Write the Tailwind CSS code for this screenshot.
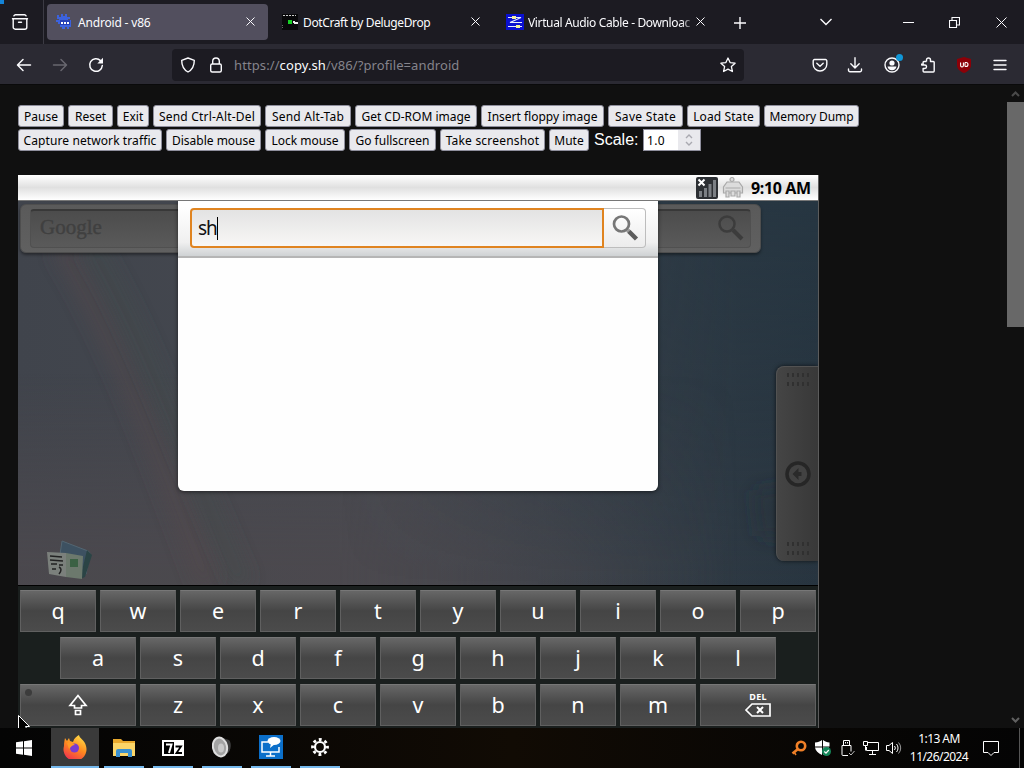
<!DOCTYPE html>
<html lang="en">
<head>
    <meta charset="UTF-8">
    <meta name="viewport" content="width=device-width, initial-scale=1.0">
    <title>Android - v86</title>
    <script src="https://cdn.jsdelivr.net/npm/@tailwindcss/browser@4"></script>
</head>
<body class="w-[1024px] h-[768px] overflow-hidden bg-[#101010] font-['Noto_Sans',sans-serif] flex flex-col relative">

    <!-- Tab strip -->
    <header class="h-[44px] shrink-0 bg-[#1c1b22] flex items-center text-[#fbfbfe] text-[12px]">
        <div class="w-[43px] flex justify-center pr-[3px]">
            <svg class="w-[18px] h-[18px]" viewBox="0 0 18 18" fill="none" stroke="currentColor" stroke-width="1.4" stroke-linecap="round"><path d="M2.900 2.800a2 2 0 0 1 1.600-1h9a2 2 0 0 1 1.600 1"/><path d="M1.500 5.800h15"/><path d="M2.200 5.800v8.400a2 2 0 0 0 2 2h9.600a2 2 0 0 0 2-2V5.800"/><path d="M7.500 9.300h3"/></svg>
        </div>
        <div class="w-px h-full bg-[#3c3b44]"></div>
        <div class="flex gap-1 pl-[3px] h-[36px] -mt-px">
            <div class="w-[221px] rounded bg-[#524f5e] flex items-center pl-[9px] pr-[12px]">
                <svg class="w-4 h-4 shrink-0" viewBox="0 0 16 16"><path fill="#3c62dd" d="M1 1h2v2h2V0h2v2h2V0h2v3h3v2h-2v1h3v7h-2v2h-2v-2H9v2H6v-2H4v-3H2V8H0V6h3V5H1z"/><path fill="#243fb5" d="M4 6h10v5H4z"/><path fill="#fff" d="M5 8h2v2H5zM8 8h2v2H8zM11 8h2v2h-2z"/></svg>
                <span class="ml-[6px] mt-[2px] flex-1 whitespace-nowrap tracking-[-0.18px]">Android - v86</span>
                <svg class="w-[11px] h-[11px]" viewBox="0 0 11 11" stroke="currentColor"><path d="M1.500 1.500l8 8M9.500 1.500l-8 8"/></svg>
            </div>
            <div class="w-[221px] flex items-center pl-[10px] pr-[12px]">
                <svg class="w-4 h-4 shrink-0" viewBox="0 0 16 16"><path fill="#08080a" d="M0 0h16v16H0z"/><path stroke="#ccc" stroke-dasharray="2 1" d="M1 1.500h13"/><path fill="#18d026" d="M6 6h4v4H6z"/><path fill="#eee" d="M11 7h2v1h3v2h-4V9h-1z"/><path stroke="#666" stroke-dasharray="1 1" d="M.5 11v4"/></svg>
                <span class="ml-[5px] mt-[2px] flex-1 whitespace-nowrap tracking-[-0.38px]">DotCraft by DelugeDrop</span>
                <svg class="w-[11px] h-[11px]" viewBox="0 0 11 11" stroke="currentColor"><path d="M1.500 1.500l8 8M9.500 1.500l-8 8"/></svg>
            </div>
            <div class="w-[221px] flex items-center pl-[10px] pr-[11px]">
                <svg class="w-[18px] h-4 -mx-px shrink-0" viewBox="0 0 18 16"><path fill="#0a10d0" d="M0 0h18v16H0z"/><path fill="none" stroke="#e8eeff" stroke-width="1.200" d="M2 3.500h13L4 8.500h4M2 12.500h14M8 8.500h8"/><path fill="#f3f0a0" d="M6 2h4v3H6zM10 11h4v3h-4z"/></svg>
                <span class="ml-[5px] mt-[2px] w-[167px] overflow-hidden whitespace-nowrap tracking-[-0.37px] mask-r-from-92%">Virtual Audio Cable - Downloac</span>
                <svg class="w-[11px] h-[11px] shrink-0" viewBox="0 0 11 11" stroke="currentColor"><path d="M1.500 1.500l8 8M9.500 1.500l-8 8"/></svg>
            </div>
        </div>
        <svg class="w-3 h-3 ml-[16px] mt-[2px]" viewBox="0 0 12 12" stroke="currentColor" stroke-width="1.400"><path d="M6 0v12M0 6h12"/></svg>
        <svg class="w-[14px] h-2 ml-[73px]" viewBox="0 0 14 8" fill="none" stroke="currentColor" stroke-width="1.400"><path d="M1.500 1L7 6.500 12.500 1"/></svg>
        <svg class="w-[11px] h-[11px] ml-[70px]" viewBox="0 0 11 11" stroke="currentColor"><path d="M0 5.500h11"/></svg>
        <svg class="w-[11px] h-[11px] ml-[35px]" viewBox="0 0 11 11" fill="none" stroke="currentColor" stroke-width="1.100"><path d="M.5 3.500h7v7h-7zM3 3V.5h7.500V8H8"/></svg>
        <svg class="w-[11px] h-[11px] ml-[36px]" viewBox="0 0 11 11" stroke="currentColor"><path d="M.5.5l10 10M10.500.5l-10 10"/></svg>
    </header>

    <!-- Navigation toolbar -->
    <nav class="h-[40px] shrink-0 bg-[#2b2a33] flex items-center text-[#fbfbfe] pt-px">
        <svg class="w-4 h-4 ml-4" viewBox="0 0 16 16" fill="none" stroke="currentColor" stroke-width="1.500" stroke-linecap="round" stroke-linejoin="round"><path d="M14.500 8H1.800M7 2.500L1.500 8 7 13.500"/></svg>
        <svg class="w-4 h-4 ml-5 text-[#68676f]" viewBox="0 0 16 16" fill="none" stroke="currentColor" stroke-width="1.500" stroke-linecap="round" stroke-linejoin="round"><path d="M1.500 8h12.700M9 2.500L14.500 8 9 13.500"/></svg>
        <svg class="w-4 h-4 ml-5" viewBox="0 0 16 16" fill="none" stroke="currentColor" stroke-width="1.500" stroke-linecap="round"><path d="M14.300 8.500A6.300 6.300 0 1 1 12.500 3.600"/><path fill="currentColor" stroke="none" d="M15 .8v5.700H9.300z"/></svg>
        <div class="ml-[68px] w-[572px] h-8 rounded bg-[#1c1b22] flex items-center text-[13px]">
            <svg class="w-4 h-4 ml-2" viewBox="0 0 16 16" fill="none" stroke="currentColor" stroke-width="1.400" stroke-linejoin="round"><path d="M8 1l6.300 2.300c0 5.200-1.800 9.400-6.300 11.700C3.500 12.700 1.700 8.500 1.700 3.300z"/></svg>
            <svg class="w-4 h-4 ml-3" viewBox="0 0 16 16" fill="none" stroke="currentColor" stroke-width="1.400"><rect x="2.700" y="7" width="10.600" height="8" rx="1.500"/><path d="M4.700 7V4.300a3.300 3.300 0 0 1 6.600 0V7"/></svg>
            <span class="ml-[10px] mt-[2px] flex-1 text-[#85848c] whitespace-nowrap tracking-[0.1px]">https://<span class="text-[#fbfbfe]">copy.sh</span>/v86/?profile=android</span>
            <svg class="w-4 h-4 mr-2" viewBox="0 0 16 16" fill="none" stroke="currentColor" stroke-width="1.300" stroke-linejoin="round"><path d="M8 1l2.100 4.600 5 .6-3.700 3.400 1 4.900L8 12.100l-4.400 2.400 1-4.900L.9 6.200l5-.6z"/></svg>
        </div>
        <svg class="w-4 h-4 ml-[68px]" viewBox="0 0 16 16" fill="none" stroke="currentColor" stroke-width="1.400" stroke-linecap="round" stroke-linejoin="round"><path d="M2.500 2.500h11a1.300 1.300 0 0 1 1.300 1.300v3.400a6.800 6.800 0 0 1-13.600 0V3.800a1.300 1.300 0 0 1 1.300-1.300z"/><path d="M4.800 6.300L8 9.300l3.200-3"/></svg>
        <svg class="w-4 h-4 ml-[19px]" viewBox="0 0 16 16" fill="none" stroke="currentColor" stroke-width="1.400" stroke-linecap="round" stroke-linejoin="round"><path d="M8 .8v10M3.800 6.800L8 11l4.200-4.200M1.500 12v1.200a1.500 1.500 0 0 0 1.500 1.500h10a1.500 1.500 0 0 0 1.500-1.500V12"/></svg>
        <div class="relative ml-[21px]">
            <svg class="w-4 h-4" viewBox="0 0 16 16" fill="none" stroke="currentColor" stroke-width="1.400"><circle cx="8" cy="8" r="7"/><circle cx="8" cy="6" r="2.600" fill="currentColor" stroke="none"/><path fill="currentColor" stroke="none" d="M3.500 9.500h9c-.3 2.300-2 3.800-4.500 3.800s-4.200-1.500-4.500-3.800z"/></svg>
            <span class="absolute -top-[3px] -right-[3px] w-[7px] h-[7px] rounded-full bg-[#1097d8]"></span>
        </div>
        <svg class="w-4 h-4 ml-[20px]" viewBox="0 0 16 16" fill="none" stroke="currentColor" stroke-width="1.400" stroke-linejoin="round"><path d="M6.500 4.500V3a2 2 0 0 1 4 0v1.500h2.800a.9.900 0 0 1 .9.900v8.700a.9.900 0 0 1-.9.900H4a.9.900 0 0 1-.9-.9v-2.600h1.700a1.700 1.700 0 0 0 0-3.500H1.700V6.500M3.100 8V5.400a.9.900 0 0 1 .9-.9h2.500"/></svg>
        <svg class="w-4 h-4 ml-5" viewBox="0 0 16 16"><path fill="#8c0008" d="M8 0l7 2v6c0 4-3 6.500-7 8-4-1.500-7-4-7-8V2z"/><path fill="none" stroke="#fff" stroke-width="1.100" d="M4.600 5.500v3a1.200 1.200 0 0 0 2.800 0v-3M9 5.500v4M9 9.500h1a1.800 1.800 0 0 0 0-4H9"/></svg>
        <svg class="w-4 h-4 ml-5" viewBox="0 0 16 16" stroke="currentColor" stroke-width="1.400" stroke-linecap="round"><path d="M2 3.500h12M2 8h12M2 12.500h12"/></svg>
    </nav>

    <!-- Page -->
    <main class="h-[644px] shrink-0 flex border-t border-[#0a0a0b]">
        <div class="flex-1 pl-[18px] pt-[20px] flex flex-col">
            <div id="vm-buttons" class="flex flex-col gap-[2px] text-black text-[12px]">
                <div class="flex gap-1 h-[22px]">
                    <button class="w-[46px] rounded-[3px] border border-[#8f8f9d] bg-[#e9e9ed] whitespace-nowrap flex items-center justify-center pt-[2px]">Pause</button>
                    <button class="w-[45px] rounded-[3px] border border-[#8f8f9d] bg-[#e9e9ed] whitespace-nowrap flex items-center justify-center pt-[2px]">Reset</button>
                    <button class="w-[32px] rounded-[3px] border border-[#8f8f9d] bg-[#e9e9ed] whitespace-nowrap flex items-center justify-center pt-[2px]">Exit</button>
                    <button class="w-[108px] rounded-[3px] border border-[#8f8f9d] bg-[#e9e9ed] whitespace-nowrap flex items-center justify-center pt-[2px] tracking-[0.2px]">Send Ctrl-Alt-Del</button>
                    <button class="w-[86px] rounded-[3px] border border-[#8f8f9d] bg-[#e9e9ed] whitespace-nowrap flex items-center justify-center pt-[2px] tracking-[0.2px]">Send Alt-Tab</button>
                    <button class="w-[122px] rounded-[3px] border border-[#8f8f9d] bg-[#e9e9ed] whitespace-nowrap flex items-center justify-center pt-[2px]">Get CD-ROM image</button>
                    <button class="w-[123px] rounded-[3px] border border-[#8f8f9d] bg-[#e9e9ed] whitespace-nowrap flex items-center justify-center pt-[2px]">Insert floppy image</button>
                    <button class="w-[75px] rounded-[3px] border border-[#8f8f9d] bg-[#e9e9ed] whitespace-nowrap flex items-center justify-center pt-[2px] tracking-[0.3px]">Save State</button>
                    <button class="w-[73px] rounded-[3px] border border-[#8f8f9d] bg-[#e9e9ed] whitespace-nowrap flex items-center justify-center pt-[2px] tracking-[0.1px]">Load State</button>
                    <button class="w-[95px] rounded-[3px] border border-[#8f8f9d] bg-[#e9e9ed] whitespace-nowrap flex items-center justify-center pt-[2px] -tracking-[0.1px]">Memory Dump</button>
                </div>
                <div class="flex gap-1 h-[22px]">
                    <button class="w-[144px] rounded-[3px] border border-[#8f8f9d] bg-[#e9e9ed] whitespace-nowrap flex items-center justify-center pt-[2px] tracking-[0.1px]">Capture network traffic</button>
                    <button class="w-[95px] rounded-[3px] border border-[#8f8f9d] bg-[#e9e9ed] whitespace-nowrap flex items-center justify-center pt-[2px]">Disable mouse</button>
                    <button class="w-[80px] rounded-[3px] border border-[#8f8f9d] bg-[#e9e9ed] whitespace-nowrap flex items-center justify-center pt-[2px]">Lock mouse</button>
                    <button class="w-[87px] rounded-[3px] border border-[#8f8f9d] bg-[#e9e9ed] whitespace-nowrap flex items-center justify-center pt-[2px]">Go fullscreen</button>
                    <button class="w-[105px] rounded-[3px] border border-[#8f8f9d] bg-[#e9e9ed] whitespace-nowrap flex items-center justify-center pt-[2px] tracking-[0.2px]">Take screenshot</button>
                    <button class="w-[40px] rounded-[3px] border border-[#8f8f9d] bg-[#e9e9ed] whitespace-nowrap flex items-center justify-center pt-[2px]">Mute</button>
                    <span class="w-[46px] pl-px text-white text-[16px] leading-[21px] font-['Liberation_Sans',sans-serif]">Scale:</span>
                    <div class="w-[58px] bg-white border border-[#8f8f9d] flex items-center justify-between pl-[3px]">
                        <span class="pt-[2px] tracking-[0.3px]">1.0</span>
                        <span class="w-[22px] h-full bg-[#e9e9ed] flex items-center justify-center">
                            <svg class="w-2 h-3" viewBox="0 0 8 12" fill="none" stroke="#a9a9b0" stroke-width="1.400"><path d="M1 4l3-3 3 3M1 8l3 3 3-3"/></svg>
                        </span>
                    </div>
                </div>
            </div>

            <!-- Emulated screen -->
            <div class="mt-[24px] w-[801px] h-[553px] flex flex-col border-r border-[#5c5c5c]">
                <div class="h-[26px] shrink-0 bg-linear-to-b from-white via-[#e0e0e0] to-white border-b border-[#777] flex items-center justify-end pr-[7px]">
                    <svg class="w-[22px] h-[22px]" viewBox="0 0 22 22"><rect width="22" height="22" rx="2" fill="#2c2f33"/><path fill="#7b7f84" d="M3 14h3v6H3zM8 11h3v9H8zM12.500 7h3v13h-3zM17 3h3v17h-3z"/><path stroke="#fff" stroke-width="2" d="M2.500 2.500l6 6M8.500 2.500l-6 6"/></svg>
                    <svg class="w-[22px] h-[23px] ml-[4px]" viewBox="0 0 22 23" fill="#dcdcdc" stroke="#a9a9a9" stroke-width="1.200"><circle cx="10" cy="3.500" r="2"/><path d="M5 6h12l3.500 5v6h-19v-6z"/><path d="M3.500 12h15M4 15h3v6H4zM9 15h4v5H9zM15 15h3v6h-3z"/></svg>
                    <span class="w-[60px] ml-[7px] text-[16px] font-bold text-black leading-none tracking-[-0.35px] whitespace-nowrap">9:10 AM</span>
                </div>
                <div class="relative h-[384px] shrink-0 overflow-hidden bg-linear-to-r from-[#40444c] from-0% via-[#464950] via-45% to-[#283540] to-100%">
                    <!-- Wallpaper tints -->
                    <div class="absolute inset-0 bg-linear-to-t from-[#4c494e]/90 from-5% to-transparent to-55% mask-r-from-40% mask-r-to-90%"></div>
                    <div class="absolute inset-0 bg-linear-to-b from-[#253642]/60 to-transparent mask-l-from-10% mask-l-to-60%"></div>
                    <svg class="absolute inset-0 w-full h-full" viewBox="0 0 800 384" preserveAspectRatio="none">
                        <defs><filter id="soft" x="-50%" y="-50%" width="200%" height="200%"><feGaussianBlur stdDeviation="9"/></filter></defs>
                        <path fill="none" stroke="#54494a" stroke-opacity=".55" stroke-width="20" filter="url(#soft)" d="M42 45C95 130 140 250 190 384"/>
                        <path fill="none" stroke="#434c49" stroke-opacity=".5" stroke-width="18" filter="url(#soft)" d="M72 45C124 130 165 250 225 384"/>
                        <path fill="#202c3a" fill-opacity=".4" filter="url(#soft)" d="M735 290l65-10v60l-60-5z"/>
                    </svg>

                    <!-- Home screen search widget -->
                    <div class="absolute left-[2px] top-[3px] w-[741px] h-[49px] rounded-md bg-linear-to-b from-[#5a5a5a] to-[#606060] border border-[#4e4e4e] shadow-[0_2px_3px_#0006] px-[9px] py-[4px]">
                        <div class="h-full rounded-[4px] border border-[#505050] border-t-2 border-t-[#383838] bg-linear-to-b from-[#4c4c4c] to-[#5a5a5a] flex items-center justify-between pl-[9px] pr-[6px]">
                            <span class="-mt-[3px] font-['Liberation_Serif',serif] text-[21px] text-[#404040] [-webkit-text-stroke:0.4px_#404040]">Google</span>
                            <svg class="w-[28px] h-[28px] -mt-[3px]" viewBox="0 0 28 28" fill="none" stroke="#3c3c3c"><circle cx="11" cy="10" r="7.500" stroke-width="2.500"/><path stroke-width="4" d="M17 16l9 9"/></svg>
                        </div>
                    </div>

                    <!-- Side drawer handle -->
                    <div class="absolute left-[758px] top-[165px] w-[42px] h-[195px] rounded-l-lg bg-linear-to-r from-[#454545] to-[#383838] border-l border-t border-[#525252] shadow-[0_0_4px_#000a] flex flex-col items-center justify-between py-[5px]">
                        <svg class="w-6 h-[15px]" viewBox="0 0 24 15" stroke="#303030" stroke-width="4" stroke-dasharray="2 3"><path d="M1 3h23M1 12h23"/></svg>
                        <svg class="w-[26px] h-[26px] mt-[20px]" viewBox="0 0 26 26"><circle cx="13" cy="13" r="11" fill="#424242" stroke="#262626" stroke-width="3.500"/><path fill="#2a2a2a" d="M7.500 13l6-6v4h3v4h-3v4z"/></svg>
                        <svg class="w-6 h-[15px]" viewBox="0 0 24 15" stroke="#303030" stroke-width="4" stroke-dasharray="2 3"><path d="M1 3h23M1 12h23"/></svg>
                    </div>

                    <!-- Messaging shortcut -->
                    <svg class="absolute left-[28px] top-[337px] w-[48px] h-[44px]" viewBox="0 0 48 44"><path fill="#3d5161" stroke="#536672" d="M16 3l26 10q2 1 2 3l-4 20-28-6z"/><path fill="#2b4445" d="M41 12l5 5-7 22-5 2z"/><path fill="#7b807c" d="M1 14l19 1v24L3 36z"/><path fill="#6c796d" d="M20 15l17 3-1 23-16-2z"/><path fill="none" stroke="#222" stroke-width="1.500" d="M4 18l12 1M4 22l13 1M5 26h6M13 27h4M6 31h4M13 29q4 2 0 7"/><path fill="#3b6144" d="M24 21h8v8h-8z"/></svg>

                    <!-- Search dialog -->
                    <div class="absolute left-[160px] top-0 w-[480px] h-[290px] rounded-b-md bg-[#fefefe] shadow-[0_1px_4px_#0008] overflow-hidden flex flex-col">
                        <div class="h-[57px] shrink-0 bg-linear-to-b from-white from-10% via-[#f0f0f0] via-75% to-[#cfd2d4] border-b-2 border-[#b5b5b5] pl-[12px] pr-[12px] pt-[7px] flex">
                            <div class="w-[414px] h-[40px] border-2 border-[#e08420] rounded-l-[4px] bg-linear-to-b from-[#e3e3e3] to-[#f8f7f5] flex items-center pl-[6px]">
                                <span class="text-[19px] leading-none text-[#111] -tracking-[1px]">sh</span><span class="w-px h-[23px] bg-black"></span>
                            </div>
                            <div class="w-[42px] h-[40px] border border-l-0 border-[#bdbdbd] rounded-r-[4px] bg-linear-to-b from-white to-[#ececec] flex items-center justify-center">
                                <svg class="w-[28px] h-[28px]" viewBox="0 0 28 28" fill="none" stroke="#777"><circle cx="10.500" cy="10" r="7.500" stroke-width="2.700"/><path stroke-width="4" d="M16.500 16l2 2" stroke="#999"/><path stroke-width="4.500" d="M18 17.500l7.500 7.500" stroke="#5c5c5c"/></svg>
                            </div>
                        </div>
                    </div>
                </div>

                <!-- On-screen keyboard -->
                <div id="keyboard" class="flex-1 bg-[#1a1f1e] border-t border-black pt-[4px] flex flex-col gap-[5px] items-center"></div>
            </div>
        </div>

        <!-- Scrollbar -->
        <aside class="w-[17px] bg-[#101010] flex flex-col items-center">
            <span class="h-[17px] flex items-center"><svg class="w-[9px] h-[6px]" viewBox="0 0 9 6" fill="none" stroke="#4a4a4a" stroke-width="2"><path d="M1 5l3.500-3.500L8 5"/></svg></span>
            <div class="w-full h-[225px] bg-[#686868]"></div>
            <span class="mt-auto h-[17px] flex items-center"><svg class="w-[9px] h-[6px]" viewBox="0 0 9 6" fill="none" stroke="#606060" stroke-width="2"><path d="M1 1l3.500 3.500L8 1"/></svg></span>
        </aside>
    </main>

    <!-- Windows taskbar -->
    <footer class="h-[40px] shrink-0 bg-linear-to-r from-[#040404] via-[#110b04] to-[#040404] flex text-white">
        <div class="w-[51px] flex items-center justify-center pr-[3px]">
            <svg class="w-4 h-4" viewBox="0 0 16 16" fill="#fff"><path d="M0 2.300L7 1.300V7.500H0zM8 1.200L16 0v7.500H8zM0 8.500h7v6.200L0 13.700zM8 8.500h8V16l-8-1.200z"/></svg>
        </div>
        <div class="flex gap-px">
            <div class="w-12 bg-[#3a3a3a] border-b-2 border-[#76b9ed] flex items-center justify-center">
                <svg class="w-6 h-6" viewBox="0 0 24 24"><defs><linearGradient id="fox" x1=".8" y1="0" x2=".3" y2="1"><stop offset="0" stop-color="#ffe14a"/><stop offset=".5" stop-color="#ff8a1e"/><stop offset="1" stop-color="#f0304f"/></linearGradient></defs><path fill="url(#fox)" d="M2 3l2 3 2-3 1 3 3 1c1-4 4-6 6-7 0 3 6 5 7 11a11.500 11.500 0 1 1-22 0c0-3 .5-6 1-8z"/><circle cx="11.500" cy="13" r="4.500" fill="#7a3bd0"/><path fill="#ff9a26" d="M4 8c3-1 6 0 8 2-3 0-4 2-6 4z"/></svg>
            </div>
            <div class="w-12 px-1 flex flex-col"><div class="flex-1 flex items-center justify-center pt-[2px]">
                <svg class="w-[22px] h-[20px]" viewBox="0 0 22 20"><path fill="#e9a92d" d="M0 1h8l2 2h12v4H0z"/><path fill="#fbd568" d="M0 5h22v13H0z"/><path fill="#3a90cf" d="M3 19v-6a2 2 0 0 1 2-2h12a2 2 0 0 1 2 2v6h-4v-4H7v4z"/></svg>
            </div><div class="h-[2px] bg-[#76b9ed]"></div></div>
            <div class="w-12 px-1 flex flex-col"><div class="flex-1 flex items-center justify-center pt-[2px]">
                <svg class="w-[22px] h-[16px]" viewBox="0 0 22 16"><path fill="#fff" d="M0 0h22v16H0z"/><path fill="#000" d="M2 2h10v12H2z"/><path fill="none" stroke="#fff" stroke-width="2" d="M4 4.500h5.500L7 13"/><path fill="none" stroke="#000" stroke-width="1.800" d="M13.500 6.500h5.500L14.500 13H20"/></svg>
            </div><div class="h-[2px] bg-[#76b9ed]"></div></div>
            <div class="w-12 px-1 flex flex-col"><div class="flex-1 flex items-center justify-center">
                <svg class="w-[20px] h-[22px]" viewBox="0 0 20 22"><path fill="#3c3c3c" d="M8 1l9 3c3 3 2 10-1 13l-7 4z"/><ellipse cx="8" cy="11" rx="7" ry="9.500" transform="rotate(-12 8 11)" fill="#a3a3a3" stroke="#dedede" stroke-width="2"/><ellipse cx="9" cy="12" rx="3" ry="4.500" fill="#c9c9c9"/></svg>
            </div><div class="h-[2px] bg-[#76b9ed]"></div></div>
            <div class="w-12 px-1 flex flex-col"><div class="flex-1 flex items-center justify-center">
                <svg class="w-6 h-6" viewBox="0 0 24 24"><path fill="#0b6fca" d="M0 0h24v24H0z"/><path fill="none" stroke="#fff" stroke-width="1.500" d="M9 7H3v10h17v-5M11.500 17v4M7 21h9"/><ellipse cx="15" cy="6" rx="6.500" ry="4" fill="#fff"/><path fill="#fff" d="M12 8l-1 5 5-4z"/></svg>
            </div><div class="h-[2px] bg-[#76b9ed]"></div></div>
            <div class="w-12 px-1 flex flex-col"><div class="flex-1 flex items-center justify-center">
                <svg class="w-[18px] h-[18px]" viewBox="0 0 18 18" fill="none" stroke="#fff"><circle cx="9" cy="9" r="5" stroke-width="2.200"/><circle cx="9" cy="9" r="7.500" stroke-width="2.800" stroke-dasharray="2.900 2.990" stroke-dashoffset="1.450"/></svg>
            </div><div class="h-[2px] bg-[#76b9ed]"></div></div>
        </div>
        <div class="ml-auto flex items-center">
            <svg class="w-4 h-4" viewBox="0 0 16 16" fill="none" stroke="#f08028"><circle cx="10" cy="6" r="4.200" stroke-width="2.600"/><path stroke-width="2.600" d="M7 9l-5.500 4.500"/><path stroke-width="1.500" d="M3 12l2 3"/></svg>
            <svg class="w-4 h-4 ml-[8px]" viewBox="0 0 16 16"><path fill="#fff" d="M7 0v6.500H0V2.500C3 2.500 5 1.500 7 0zM8 0c2 1.500 4 2.500 6.500 2.500v4H8zM0 7.500h7V15C3 13 .5 11 0 7.500zM8 7.500h6C13 11 11 13 8 15z"/><circle cx="11.500" cy="11.500" r="4.500" fill="#16875a"/><path fill="none" stroke="#fff" stroke-width="1.200" d="M9.300 11.500l1.700 1.700 2.800-3.200"/></svg>
            <svg class="w-[14px] h-4 ml-[10px]" viewBox="0 0 14 16" fill="none" stroke="#fff"><path d="M2.500 5V.5h6V5M1 5.500h9v6M1 5.500v9q0 1 1 1h5M4.500 2v1.500M6.500 2v1.500"/><path stroke="#bbb" d="M8 13l2 2 3.500-4"/></svg>
            <svg class="w-4 h-4 ml-[8px]" viewBox="0 0 16 16" fill="none" stroke="#fff"><path d="M5 2.500h10.500v8H3.500V7M9.500 10.500v4M6 14.500h7M.5 1.500h4v4h-4zM2.500 5.500v5"/></svg>
            <svg class="w-4 h-4 ml-[7px]" viewBox="0 0 16 16" fill="none" stroke="#fff"><path d="M.5 5.500H3l3.500-3v11l-3.500-3H.5zM8.500 6a3 3 0 0 1 0 4M10.500 4a6 6 0 0 1 0 8"/><path stroke="#999" d="M12.500 2.500a8 8 0 0 1 0 11"/></svg>
            <div class="w-[62px] ml-[6px] text-center text-[12px] leading-[18px] -tracking-[0.55px] whitespace-nowrap">
                <p>1:13 AM</p>
                <p>11/26/2024</p>
            </div>
            <svg class="w-4 h-4 ml-[13px]" viewBox="0 0 16 16" fill="none" stroke="#fff"><path d="M.5 1.500h15v11H11L8 15.500l-3-3H.5z"/></svg>
            <div class="w-px h-[40px] ml-[20px] mr-[4px] bg-[#555]"></div>
        </div>
    </footer>

    <!-- Desktop corner and pointer -->
    <div class="absolute left-0 top-0 w-1 h-1 bg-[#1484d8]"></div>
    <svg class="absolute left-[18px] top-[715px] w-[13px] h-[13px]" viewBox="0 0 13 13"><path fill="#000" stroke="#fff" d="M.5.5l11 11H7.500L9 14H.5z"/></svg>

    <script>
        const rows = ['qwertyuiop', 'asdfghjkl', '^zxcvbnm<'];
        const keyboard = document.getElementById('keyboard');

        // Special keys are wider and hold an icon instead of a letter
        const shiftIcon = `<svg class="w-5 h-[22px] mr-px" viewBox="0 0 20 22" fill="none" stroke="#fff" stroke-width="1.700"><path d="M10 1.500L2 11.500h4.500v2.500h7v-2.500H18z"/><path d="M7.500 16.500h5v4h-5z"/></svg>`;
        const delIcon = `<span class="flex flex-col items-center pb-px text-[9px] leading-[9px] font-bold tracking-wide">DEL<svg class="w-[26px] h-[14px] mt-[2px]" viewBox="0 0 26 14" fill="none" stroke="#fff" stroke-width="1.700"><path d="M1 7l6-6h18v12H7z"/><path stroke-width="2" d="M12 4l6 6M18 4l-6 6"/></svg></span>`;

        rows.forEach(row => {
            const rowEl = document.createElement('div');
            rowEl.className = 'flex gap-[4px] h-[42px]';
            [...row].forEach(key => {
                const keyEl = document.createElement('div');
                const wide = key === '^' || key === '<';
                keyEl.className = (wide ? 'w-[116px]' : 'w-[76px]') +
                    ' relative flex items-center justify-center text-white text-[21.5px] leading-none border border-[#606060] border-t-[#777] bg-linear-to-b from-[#676767] via-[#454545] to-[#4b4b4b]';
                keyEl.innerHTML = key === '^' ? shiftIcon + '<span class="absolute left-[4px] top-[4px] w-[7px] h-[7px] rounded-full bg-[#3c3c3c]"></span>' : key === '<' ? delIcon : key;
                rowEl.appendChild(keyEl);
            });
            keyboard.appendChild(rowEl);
        });
    </script>
</body>
</html>
